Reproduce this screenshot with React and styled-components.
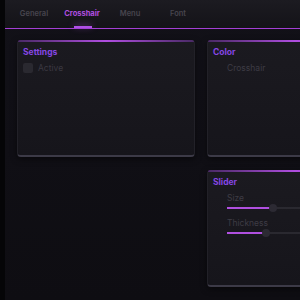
import React from 'react'
import styled, { createGlobalStyle } from 'styled-components'

const GlobalStyle = createGlobalStyle`
    html, body {
        margin: 0;
        padding: 0;
        width: 300px;
        height: 300px;
        overflow: hidden;
        background: #050507;
        font-family: Inter, "Noto Sans", sans-serif;
    }
`
const Frame = styled.div`
    width: 300px;
    height: 300px;
    padding-left: 5px;
    box-sizing: border-box;
    background: #050507;
`
const Window = styled.div`
    height: 100%;
    background: linear-gradient(180deg, #121118 0%, #0e0d12 100%);
    overflow: hidden;
`
const TabBar = styled.div`
    display: flex;
    height: 28px;
    padding-left: 5px;
    background: linear-gradient(180deg, #1c1b21 0%, #141318 100%);
    border-bottom: 1px solid #a33fd4;
`
const Tab = styled.div`
    position: relative;
    width: 48px;
    display: flex;
    justify-content: center;
    padding-top: 9px;
    font-size: 7.5px;
    font-weight: ${(p) => (p.active ? 700 : 600)};
    color: ${(p) => (p.active ? '#b04ee0' : '#47454e')};

    ${(p) =>
        p.active &&
        `&::after {
            content: '';
            position: absolute;
            left: 16px;
            bottom: 0;
            width: 18px;
            height: 2px;
            background: #b050e8;
            box-shadow: 0 -1px 6px rgba(176, 80, 232, 0.6);
        }`}
`
const Grid = styled.div`
    display: grid;
    grid-template-columns: 178px 178px;
    grid-auto-rows: 117px;
    column-gap: 12px;
    row-gap: 13px;
    padding: 11px 0 0 12px;
`
const Panel = styled.div`
    grid-column: ${(p) => p.col};
    grid-row: ${(p) => p.row};
    position: relative;
    box-sizing: border-box;
    border-radius: 4px;
    background: linear-gradient(180deg, #1b1a20 0%, #16151b 100%);
    border: 1px solid #222128;
    border-bottom: 2px solid #3c3a47;
    padding: 6px 5px;
    box-shadow: 0 2px 6px rgba(0, 0, 0, 0.5);

    &::before {
        content: '';
        position: absolute;
        left: 0;
        right: 0;
        top: -1px;
        height: 2px;
        border-radius: 4px 4px 0 0;
        background: linear-gradient(90deg, #4a2a66 0%, #b04ee0 50%, #4a2a66 100%);
    }
`
const Title = styled.div`
    font-size: 8.5px;
    font-weight: 700;
    color: #8646e4;
    margin-bottom: 6px;
`
const CheckRow = styled.div`
    display: flex;
    align-items: center;
    gap: 5px;
    font-size: 8.5px;
    color: #3a3841;
`
const Checkbox = styled.div`
    width: 10px;
    height: 10px;
    border-radius: 2px;
    background: #2a2930;
`
const Label = styled.div`
    font-size: 8.5px;
    color: #3e3c45;
    padding-left: 14px;
    margin-top: ${(p) => p.mt || 0}px;
`
const Track = styled.div`
    position: relative;
    margin: 4px 0 0 14px;
    height: 2px;
    width: 120px;
    background: #2a2930;
`
const Fill = styled.div`
    height: 100%;
    background: #b050e0;
`
const Thumb = styled.div`
    position: absolute;
    top: -3px;
    width: 8px;
    height: 8px;
    margin-left: -2px;
    border-radius: 50%;
    background: #2c2a33;
`

const Slider = ({ fill }) => (
    <Track>
        <Fill style={{ width: fill }} />
        <Thumb style={{ left: fill }} />
    </Track>
)

const tabs = ['General', 'Crosshair', 'Menu', 'Font']

export default function App() {
    return (
        <Frame>
            <GlobalStyle />
            <Window>
                <TabBar>
                    {tabs.map((t) => (
                        <Tab key={t} active={t === 'Crosshair'}>
                            {t}
                        </Tab>
                    ))}
                </TabBar>
                <Grid>
                    <Panel col={1} row={1}>
                        <Title>Settings</Title>
                        <CheckRow>
                            <Checkbox />
                            Active
                        </CheckRow>
                    </Panel>
                    <Panel col={2} row={1}>
                        <Title>Color</Title>
                        <Label mt={6}>Crosshair</Label>
                    </Panel>
                    <Panel col={2} row={2}>
                        <Title>Slider</Title>
                        <Label>Size</Label>
                        <Slider fill={44} />
                        <Label mt={9}>Thickness</Label>
                        <Slider fill={37} />
                    </Panel>
                </Grid>
            </Window>
        </Frame>
    )
}
